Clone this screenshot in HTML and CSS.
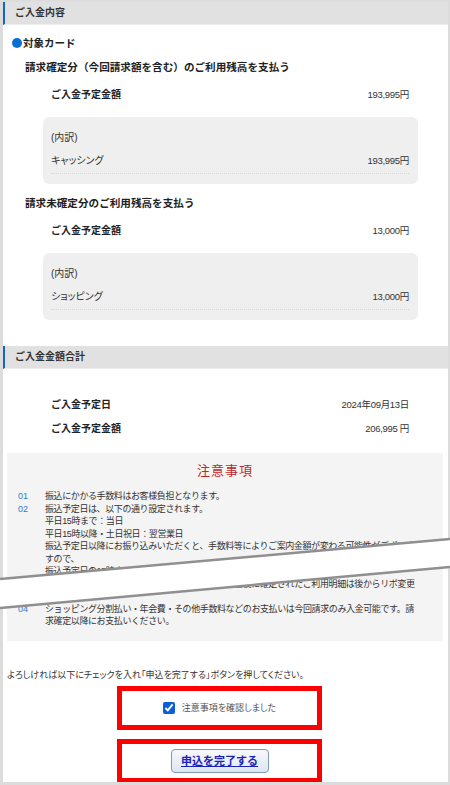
FILE: index.html
```html
<!DOCTYPE html>
<html lang="ja">
<head>
  <meta charset="UTF-8" />
  <meta name="viewport" content="width=device-width, initial-scale=1.0" />
  <title>ご入金内容の確認</title>
  <link rel="stylesheet" href="styles.css">
</head>
<body>
  <div class="page">
    <h2 class="sec-head">ご入金内容</h2>
    <p class="card-title"><span class="dot"></span>対象カード</p>

    <h3 class="plan-title">請求確定分（今回請求額を含む）のご利用残高を支払う</h3>
    <div class="row row-main">
      <span class="row-label">ご入金予定金額</span>
      <span class="amount">193,995円</span>
    </div>
    <div class="breakdown">
      <p class="breakdown-title">(内訳)</p>
      <div class="row row-sub">
        <span>キャッシング</span>
        <span class="amount">193,995円</span>
      </div>
    </div>

    <h3 class="plan-title">請求未確定分のご利用残高を支払う</h3>
    <div class="row row-main">
      <span class="row-label">ご入金予定金額</span>
      <span class="amount">13,000円</span>
    </div>
    <div class="breakdown">
      <p class="breakdown-title">(内訳)</p>
      <div class="row row-sub">
        <span>ショッピング</span>
        <span class="amount">13,000円</span>
      </div>
    </div>

    <h2 class="sec-head sec-head-total">ご入金金額合計</h2>
    <div class="row row-total">
      <span class="row-label">ご入金予定日</span>
      <span class="amount">2024年09月13日</span>
    </div>
    <div class="row row-total row-total-sum">
      <span class="row-label">ご入金予定金額</span>
      <span class="amount">206,995 円</span>
    </div>

    <div class="notes">
      <p class="notes-title">注意事項</p>
      <ol class="notes-list">
        <li><span class="num">01</span><span>振込にかかる手数料はお客様負担となります。</span></li>
        <li><span class="num">02</span><span>振込予定日は、以下の通り設定されます。<br>平日15時まで：当日<br>平日15時以降・土日祝日：翌営業日<br>振込予定日以降にお振り込みいただくと、手数料等によりご案内金額が変わる可能性がございま<br>すので、<br>振込予定日の15時までにお振り込みください。</span></li>
        <li><span class="num">03</span><span>ご入金予定金額の変更はできません。また、ご入金後に確定されたご利用明細は後からリボ変更<br>できます。</span></li>
        <li><span class="num">04</span><span>ショッピング分割払い・年会費・その他手数料などのお支払いは今回請求のみ入金可能です。請<br>求確定以降にお支払いください。</span></li>
      </ol>
    </div>

    <p class="guide">よろしければ以下にチェックを入れ「申込を完了する」ボタンを押してください。</p>
    <div class="mark">
      <label class="check">
        <input type="checkbox" checked>
        <span>注意事項を確認しました</span>
      </label>
    </div>
    <div class="mark mark-btn">
      <a class="btn" href="#">申込を完了する</a>
    </div>
  </div>

  <!-- 省略を示す破れ線 -->
  <svg class="tear" width="450" height="90" viewBox="0 0 450 90">
    <polygon points="0,49 450,9 450,37 0,78" fill="#fff" />
    <line x1="0" y1="49" x2="450" y2="9" stroke="#8f8f8f" stroke-width="2.5" />
    <line x1="0" y1="78" x2="450" y2="37" stroke="#8f8f8f" stroke-width="2.5" />
  </svg>
</body>
</html>
```

FILE: styles.css
```css
* {
  box-sizing: border-box;
}
body {
  margin: 0;
  font-family: "Liberation Sans", "Noto Sans CJK JP", sans-serif;
  color: #222;
  position: relative;
}
p, h2, h3 {
  margin: 0;
}
.page {
  height: 785px;
  border: 2px solid #dcdcdc;
  border-left-width: 3px;
  border-bottom-width: 3px;
  overflow: hidden;
  background: #fff;
}
.sec-head {
  height: 23px;
  line-height: 22px;
  padding-left: 10px;
  background: #e1e1e1;
  border-left: 2px solid #1565c0;
  border-bottom: 1px solid #efefef;
  font-size: 10px;
  font-weight: bold;
  color: #333;
}
.sec-head-total {
  margin-top: 26px;
}
.card-title {
  margin-top: 8px;
  padding-left: 9px;
  line-height: 20px;
  font-size: 10.5px;
  font-weight: bold;
}
.dot {
  display: inline-block;
  width: 10px;
  height: 10px;
  margin-right: 1px;
  border-radius: 50%;
  background: #0a6fd4;
  vertical-align: -1px;
}
.plan-title {
  margin-top: 9px;
  padding-left: 22px;
  line-height: 20px;
  font-size: 10.6px;
  font-weight: bold;
}
.card-title + .plan-title {
  margin-top: 4px;
}
.row {
  display: flex;
  justify-content: space-between;
  align-items: baseline;
  line-height: 20px;
  font-size: 10px;
}
.row-main,
.row-total {
  margin: 8px 30px 0 40px;
  padding: 0 9px 0 8px;
}
.row-total {
  margin-top: 26px;
}
.row-total-sum {
  margin-top: 4px;
}
.row-label {
  font-weight: bold;
}
.amount {
  font-size: 9.5px;
  letter-spacing: -0.3px;
  color: #333;
}
.breakdown {
  margin: 12px 30px 0 40px;
  padding: 11px 9px 10px 8px;
  background: #efefef;
  border-radius: 6px;
  font-size: 10px;
  font-feature-settings: "palt";
}
.breakdown-title {
  line-height: 20px;
  color: #333;
}
.row-sub {
  margin-top: 3px;
  padding-bottom: 2px;
  border-bottom: 1px dotted #d6d6d6;
  color: #333;
}
.notes {
  margin: 14px 5px 0 4px;
  padding: 6px 0 13px;
  background: #f4f4f4;
}
.notes-title {
  line-height: 24px;
  text-align: center;
  font-size: 13px;
  letter-spacing: 1px;
  color: #c0282e;
}
.notes-list {
  margin: 7px 0 0;
  padding: 0 6px 0 11px;
  list-style: none;
  font-size: 9px;
  letter-spacing: -0.4px;
  line-height: 12.5px;
  color: #333;
}
.notes-list li {
  display: grid;
  grid-template-columns: 27px 1fr;
  white-space: nowrap;
}
.num {
  letter-spacing: 0;
  color: #2f7ad0;
}
.guide {
  margin-top: 27px;
  padding-left: 4px;
  line-height: 14px;
  font-size: 9px;
  font-feature-settings: "palt";
  color: #333;
}
.mark {
  display: flex;
  align-items: center;
  justify-content: center;
  width: 205px;
  height: 44px;
  margin: 4px 0 0 114px;
  border: 5px solid #f00;
}
.mark-btn {
  margin-top: 9px;
}
.check {
  display: flex;
  align-items: center;
  font-size: 9px;
  font-feature-settings: "palt";
  color: #555;
}
.check input {
  width: 12px;
  height: 12px;
  margin: 0 7px 0 0;
  accent-color: #0b5ed7;
}
.btn {
  display: inline-block;
  width: 98px;
  height: 24px;
  line-height: 22px;
  border: 1px solid #7f98b6;
  border-radius: 4px;
  background: linear-gradient(#f7f9fc, #dde6f1);
  text-align: center;
  font-size: 11px;
  font-weight: bold;
  color: #1a23b8;
}
.tear {
  position: absolute;
  left: 0;
  top: 530px;
}
```
